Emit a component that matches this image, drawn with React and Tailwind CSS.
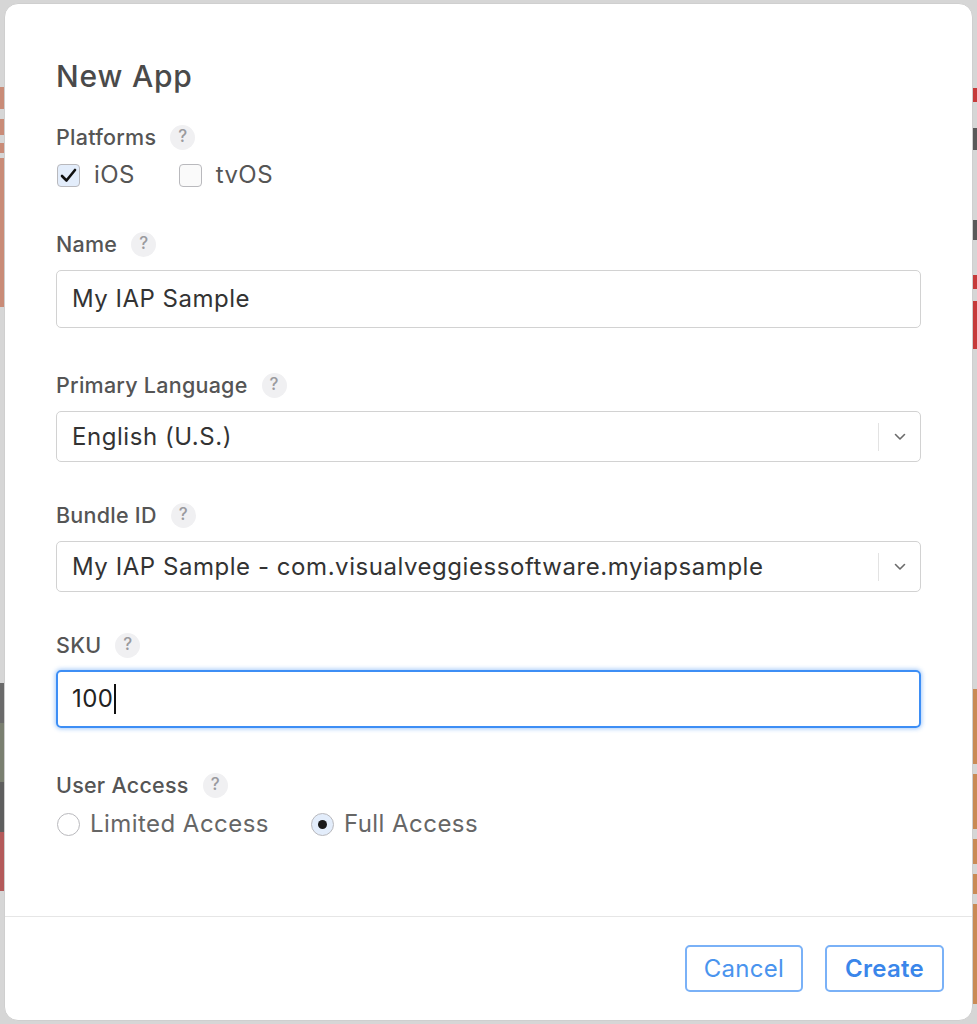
import React from "react";

const font = { fontFamily: "Inter, 'Noto Sans', 'Liberation Sans', sans-serif" };

function Help() {
  return (
    <span className="ml-[14px] inline-flex h-[25px] w-[25px] items-center justify-center rounded-full bg-[#f0f0f2] text-[17px] tracking-normal text-[#9a9a9e]">
      ?
    </span>
  );
}

function Label({ children, className = "" }) {
  return (
    <div className={"flex h-[26px] items-center text-[21.5px] font-medium tracking-[0.25px] text-[#555] " + className}>
      {children}
      <Help />
    </div>
  );
}

function Chevron() {
  return (
    <div className="flex h-full items-center">
      <div className="h-[28px] w-px bg-[#e3e3e3]" />
      <div className="flex w-[41px] items-center justify-center">
        <svg width="12" height="8" viewBox="0 0 12 8" fill="none">
          <path d="M1.5 1.5 L6 6 L10.5 1.5" stroke="#6b6b6b" strokeWidth="1.6" strokeLinecap="round" strokeLinejoin="round" />
        </svg>
      </div>
    </div>
  );
}

function Select({ value, className = "" }) {
  return (
    <div className={"flex h-[51px] items-center rounded-[5px] border border-[#d2d2d2] bg-white pl-[15px] " + className}>
      <div className="flex-1 text-[24px] tracking-[0.55px] text-[#333]">{value}</div>
      <Chevron />
    </div>
  );
}

function Strip({ blocks }) {
  return (
    <div className="flex w-[4px] flex-col">
      {blocks.map((b, i) => (
        <div key={i} style={{ height: b[0], background: b[1] }} />
      ))}
    </div>
  );
}

export default function App() {
  const left = [
    [88, "#d6d6d6"], [22, "#c98b77"], [10, "#d6d6d6"], [16, "#c98b77"], [8, "#d6d6d6"],
    [10, "#c98b77"], [6, "#d6d6d6"], [150, "#c98b77"], [380, "#d6d6d6"], [40, "#6a6a6a"],
    [60, "#7a7f70"], [50, "#5e5e5e"], [60, "#b45a5a"], [134, "#d6d6d6"],
  ];
  const right = [
    [88, "#d6d6d6"], [14, "#c63a3a"], [26, "#d6d6d6"], [22, "#5a5a5a"], [70, "#d6d6d6"],
    [20, "#5a5a5a"], [35, "#d6d6d6"], [14, "#c63a3a"], [12, "#d6d6d6"], [48, "#c63a3a"],
    [340, "#d6d6d6"], [75, "#c98a55"], [10, "#d6d6d6"], [55, "#c98a55"], [10, "#d6d6d6"],
    [25, "#c98a55"], [10, "#d6d6d6"], [20, "#c98a55"], [10, "#d6d6d6"], [100, "#c98a55"],
  ];
  return (
    <div className="flex h-[1024px] w-[977px] overflow-hidden bg-[#d6d6d6]" style={font}>
      <Strip blocks={left} />
      <div className="mt-[3px] flex h-[1018px] flex-1 flex-col rounded-[14px] border border-[#cfcfcf] bg-white">
        <div className="flex flex-col px-[51px] pt-[52px]">
          <div className="flex h-[40px] items-center text-[30px] font-medium tracking-[0.8px] text-[#4a4a4a]">New App</div>

          <Label className="mt-[28px]">Platforms</Label>
          <div className="mt-[12px] flex h-[26px] items-center text-[24px] tracking-[0.4px] text-[#555]">
            <span className="ml-[1px] flex h-[23px] w-[23px] items-center justify-center rounded-[4px] border border-[#b9b9bd] bg-[#e3edfb]">
              <svg width="17" height="15" viewBox="0 0 17 15" fill="none">
                <path d="M2 8 L6.5 12.5 L15 2" stroke="#111" strokeWidth="2.6" strokeLinecap="round" strokeLinejoin="round" />
              </svg>
            </span>
            <span className="ml-[14px]">iOS</span>
            <span className="ml-[44px] h-[23px] w-[23px] rounded-[4px] border border-[#b9b9bd] bg-[#fafafa]" />
            <span className="ml-[14px]">tvOS</span>
          </div>

          <Label className="mt-[43px]">Name</Label>
          <div className="mt-[13px] flex h-[58px] items-center rounded-[5px] border border-[#d2d2d2] pl-[15px] text-[24px] tracking-[0.5px] text-[#333]">
            My IAP Sample
          </div>

          <Label className="mt-[44px]">Primary Language</Label>
          <Select className="mt-[13px]" value="English (U.S.)" />

          <Label className="mt-[40px]">Bundle ID</Label>
          <Select className="mt-[13px]" value="My IAP Sample - com.visualveggiessoftware.myiapsample" />

          <Label className="mt-[40px]">SKU</Label>
          <div className="mt-[12px] flex h-[58px] items-center rounded-[5px] border-2 border-[#3d8ef5] pl-[14px] text-[24px] tracking-[0.4px] text-[#222] shadow-[0_0_4px_1px_rgba(61,142,245,0.45)]">
            100
            <span className="ml-[1px] h-[30px] w-[2px] bg-[#111]" />
          </div>

          <Label className="mt-[44px]">User Access</Label>
          <div className="mt-[13px] flex h-[26px] items-center text-[24px] tracking-[0.45px] text-[#666]">
            <span className="ml-[1px] h-[23px] w-[23px] rounded-full border border-[#b9b9bd] bg-white" />
            <span className="ml-[10px]">Limited Access</span>
            <span className="ml-[42px] flex h-[23px] w-[23px] items-center justify-center rounded-full border border-[#b9b9bd] bg-[#e3edfb]">
              <span className="h-[9px] w-[9px] rounded-full bg-[#1a1a1a]" />
            </span>
            <span className="ml-[10px]">Full Access</span>
          </div>
        </div>

        <div className="mt-[79px] h-px bg-[#e6e6e6]" />

        <div className="mt-[28px] flex justify-end gap-[22px] pr-[28px]">
          <button className="flex h-[47px] w-[118px] items-center justify-center rounded-[5px] border-2 border-[#7ab1f7] text-[24px] tracking-[0.3px] text-[#4a94ee]">
            Cancel
          </button>
          <button className="flex h-[47px] w-[119px] items-center justify-center rounded-[5px] border-2 border-[#7ab1f7] text-[24px] font-semibold tracking-[0.3px] text-[#3a86ea]">
            Create
          </button>
        </div>
      </div>
      <Strip blocks={right} />
    </div>
  );
}
